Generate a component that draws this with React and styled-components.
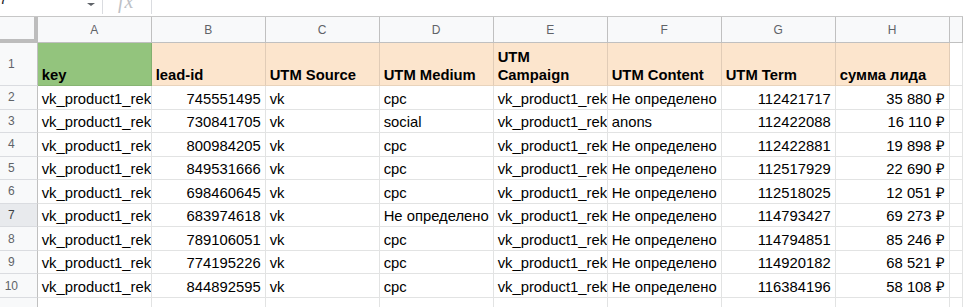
import styled, { createGlobalStyle } from "styled-components";

const GlobalStyle = createGlobalStyle`
  html, body {
    margin: 0;
    padding: 0;
    background: #ffffff;
  }
  body {
    width: 963px;
    height: 307px;
    overflow: hidden;
    font-family: "Liberation Sans", Arial, sans-serif;
  }
`;

const LETTERS = ["A", "B", "C", "D", "E", "F", "G", "H", ""];

const HEADERS = [
  { text: "key", bg: "#93c47d" },
  { text: "lead-id", bg: "#fce5cd" },
  { text: "UTM Source", bg: "#fce5cd" },
  { text: "UTM Medium", bg: "#fce5cd" },
  { text: "UTM Campaign", bg: "#fce5cd", wrap: true },
  { text: "UTM Content", bg: "#fce5cd" },
  { text: "UTM Term", bg: "#fce5cd" },
  { text: "сумма лида", bg: "#fce5cd" },
];

const ROWS = [
  ["745551495", "cpc", "Не определено", "112421717", "35 880 ₽"],
  ["730841705", "social", "anons", "112422088", "16 110 ₽"],
  ["800984205", "cpc", "Не определено", "112422881", "19 898 ₽"],
  ["849531666", "cpc", "Не определено", "112517929", "22 690 ₽"],
  ["698460645", "cpc", "Не определено", "112518025", "12 051 ₽"],
  ["683974618", "Не определено", "Не определено", "114793427", "69 273 ₽"],
  ["789106051", "cpc", "Не определено", "114794851", "85 246 ₽"],
  ["774195226", "cpc", "Не определено", "114920182", "68 521 ₽"],
  ["844892595", "cpc", "Не определено", "116384196", "58 108 ₽"],
];

const SELECTED_ROW = 7;

const Sheet = styled.div`
  width: 963px;
  height: 307px;
  overflow: hidden;
  background: #ffffff;
`;

const FormulaBar = styled.div`
  display: flex;
  height: 16px;
  border-bottom: 1px solid #c7c7c7;
  overflow: hidden;
`;

const NameBox = styled.div`
  display: flex;
  align-items: flex-start;
  width: 102px;
  flex-shrink: 0;
`;

const NameText = styled.span`
  margin: -10px 0 0 -9px;
  font-size: 15px;
  line-height: 18px;
  color: #202124;
`;

const Caret = styled.span`
  margin: 3px 7px 0 auto;
  width: 0;
  height: 0;
  border-left: 4.5px solid transparent;
  border-right: 4.5px solid transparent;
  border-top: 3.5px solid #5f6368;
`;

const Divider = styled.span`
  width: 1px;
  height: 14px;
  flex-shrink: 0;
  background: #dadce0;
`;

const FxBox = styled.div`
  display: flex;
  align-items: flex-start;
  width: 48px;
  padding-left: 15px;
  box-sizing: border-box;
  flex-shrink: 0;
`;

const FxText = styled.span`
  margin-top: -9px;
  font-family: "Liberation Serif", "Times New Roman", serif;
  font-style: italic;
  font-size: 20px;
  line-height: 20px;
  color: #bdc1c6;
  letter-spacing: 1px;
`;

const Grid = styled.div`
  display: grid;
  grid-template-columns: 37.7px repeat(8, 114px) 1fr;
  grid-template-rows: 26px 43px repeat(10, 23.56px);
`;

const Corner = styled.div`
  box-sizing: border-box;
  background: #f8f9fa;
  border-right: 4px solid #bdbdbd;
  border-bottom: 4px solid #bdbdbd;
`;

const ColHead = styled.div`
  box-sizing: border-box;
  display: flex;
  align-items: center;
  justify-content: center;
  background: #f8f9fa;
  border-right: 1px solid #c0c0c0;
  border-bottom: 1px solid #c0c0c0;
  font-size: 12px;
  color: #5f6368;
`;

const RowHead = styled.div`
  box-sizing: border-box;
  display: flex;
  align-items: center;
  justify-content: center;
  padding-right: 14px;
  background: ${({ $selected }) => ($selected ? "#e8eaed" : "#f8f9fa")};
  border-right: 1px solid #c0c0c0;
  border-bottom: 1px solid #dadce0;
  font-size: 12px;
  color: ${({ $selected }) => ($selected ? "#3c4043" : "#5f6368")};
  overflow: hidden;
`;

const TitleCell = styled.div`
  box-sizing: border-box;
  display: flex;
  align-items: flex-end;
  padding: 0 3px 1px 4px;
  background: ${({ $bg }) => $bg || "#ffffff"};
  border-right: 1px solid ${({ $bg }) => ($bg ? "rgba(0, 0, 0, 0.1)" : "#e2e3e3")};
  border-bottom: 1px solid ${({ $bg }) => ($bg ? "rgba(0, 0, 0, 0.08)" : "#e2e3e3")};
  font-size: 14.8px;
  line-height: 18px;
  font-weight: bold;
  color: #000000;
  white-space: ${({ $wrap }) => ($wrap ? "normal" : "nowrap")};
  overflow: hidden;
`;

const Cell = styled.div`
  box-sizing: border-box;
  display: flex;
  align-items: flex-end;
  justify-content: ${({ $right }) => ($right ? "flex-end" : "flex-start")};
  padding: 0 4px 1px 4px;
  border-right: 1px solid #e2e3e3;
  border-bottom: 1px solid #e2e3e3;
  font-size: 14.8px;
  line-height: 17px;
  color: #000000;
  white-space: nowrap;
  overflow: hidden;
`;

export default function App() {
  return (
    <Sheet>
      <GlobalStyle />
      <FormulaBar>
        <NameBox>
          <NameText>L7</NameText>
          <Caret />
        </NameBox>
        <Divider />
        <FxBox>
          <FxText>fx</FxText>
        </FxBox>
        <Divider />
      </FormulaBar>
      <Grid>
        <Corner />
        {LETTERS.map((l, i) => (
          <ColHead key={"c" + i}>{l}</ColHead>
        ))}

        <RowHead>1</RowHead>
        {HEADERS.map((h) => (
          <TitleCell key={h.text} $bg={h.bg} $wrap={h.wrap}>
            {h.text}
          </TitleCell>
        ))}
        <TitleCell />

        {ROWS.map((r, i) => {
          const n = i + 2;
          return [
            <RowHead key={"r" + n} $selected={n === SELECTED_ROW}>
              {n}
            </RowHead>,
            <Cell key={n + "a"}>vk_product1_reklama</Cell>,
            <Cell key={n + "b"} $right>
              {r[0]}
            </Cell>,
            <Cell key={n + "c"}>vk</Cell>,
            <Cell key={n + "d"}>{r[1]}</Cell>,
            <Cell key={n + "e"}>vk_product1_reklama</Cell>,
            <Cell key={n + "f"}>{r[2]}</Cell>,
            <Cell key={n + "g"} $right>
              {r[3]}
            </Cell>,
            <Cell key={n + "h"} $right>
              {r[4]}
            </Cell>,
            <Cell key={n + "i"} />,
          ];
        })}

        <RowHead />
        {LETTERS.map((l, i) => (
          <Cell key={"e" + i} />
        ))}
      </Grid>
    </Sheet>
  );
}
